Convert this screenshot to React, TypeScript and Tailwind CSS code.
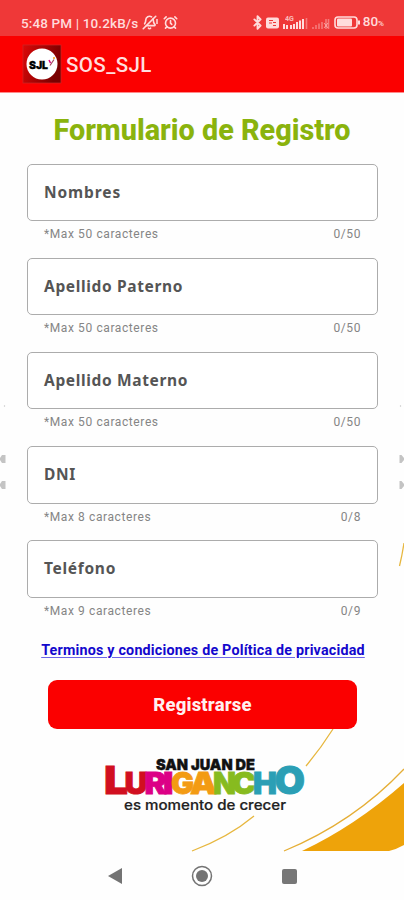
import { AlarmClock, BellOff, Bluetooth } from "lucide-react";

const fields = [
  { label: "Nombres", max: 50, spacing: "tracking-[0.9px]" },
  { label: "Apellido Paterno", max: 50, spacing: "tracking-[0.65px]" },
  { label: "Apellido Materno", max: 50, spacing: "tracking-[0.65px]" },
  { label: "DNI", max: 8, spacing: "tracking-[0.6px]" },
  { label: "Teléfono", max: 9, spacing: "tracking-[0.7px]" },
];

const logoLetters = [
  { char: "L", x: 104, width: 24, size: 39, color: "#d10f20" },
  { char: "U", x: 124.5, width: 23, size: 30, color: "#d10f20" },
  { char: "R", x: 144.5, width: 22, size: 30, color: "#dc0086" },
  { char: "I", x: 163, width: 10.5, size: 30, color: "#dc0086" },
  { char: "G", x: 171, width: 23, size: 30, color: "#f39b13" },
  { char: "A", x: 190, width: 27, size: 30, color: "#f39b13" },
  { char: "N", x: 213, width: 23, size: 30, color: "#87bb1f" },
  { char: "C", x: 232, width: 24, size: 30, color: "#87bb1f" },
  { char: "H", x: 253, width: 24, size: 30, color: "#2b9fb5" },
  { char: "O", x: 274.5, width: 30.5, size: 38, color: "#2b9fb5" },
];

const StatusBar = () => {
  return (
    <div className="flex h-9 items-end bg-[#ef3838] pl-[21px] pr-[20px] pb-[5px] text-[#ffdcdc]">
      <span className="w-[119px] whitespace-nowrap text-[13.5px] font-medium leading-[15px] tracking-[0.13px]">5:48 PM | 10.2kB/s</span>
      <div className="mb-px ml-[2px] flex">
        <BellOff className="size-[15px] -scale-x-100" strokeWidth={2.6} />
        <svg className="-ml-px" width="3" height="15" viewBox="0 0 3 15">
          <path d="M1 4v5" stroke="currentColor" strokeWidth="1.5" />
        </svg>
      </div>
      <AlarmClock className="mb-px ml-[4px] size-[15px]" strokeWidth={2.6} />
      <div className="ml-auto flex items-center">
        <Bluetooth className="size-[15px]" strokeWidth={3} />
        <svg className="ml-px" width="13" height="12" viewBox="0 0 13 12">
          <rect width="13" height="11" y=".5" rx="2" fill="currentColor" />
          <path d="M3 3.5h4M3 6h3M7 5.5h3M7 8.5h3" stroke="#ef3838" strokeWidth="1.2" />
        </svg>
        <svg className="ml-[3px]" width="50" height="15" viewBox="0 0 50 15">
          <text x="3" y="6" fontSize="7" fontWeight="700" fill="currentColor" opacity=".8">4G</text>
          <path d="M2 9v5M5 10v4M9 10v4M12 9v5M15 7v7M18 5.5v8.500M21 4v10" stroke="currentColor" strokeWidth="2" />
          <path d="M24.500 3v11M31 12v2M34 10v4M37 8.500v5.500M40 7v7M44 4v10M46.500 4v10" stroke="currentColor" strokeWidth="1.600" opacity=".4" />
          <path d="M42 8l4 5M46 8l-4 5" stroke="currentColor" opacity=".6" />
        </svg>
        <svg className="ml-[2px]" width="27" height="13" viewBox="0 0 27 13">
          <rect x="1" y="1" width="22" height="11" rx="3" fill="none" stroke="currentColor" strokeWidth="1.600" />
          <rect x="3" y="2.5" width="15" height="8" rx="1" fill="currentColor" />
          <path d="M25 4.500v4" stroke="currentColor" strokeWidth="2" />
        </svg>
        <span className="ml-[2px] text-[13.5px] font-medium leading-[14px]">80<span className="text-[8px]">%</span></span>
      </div>
    </div>
  );
};

const AppBar = () => {
  return (
    <header className="flex h-[57px] items-center border-b border-[#ff8a8a] bg-[#fb0000] pl-[22px]">
      <svg width="40" height="40" viewBox="0 0 40 40">
        <defs>
          <linearGradient id="badge" x1="0" y1="0" x2="1" y2="0.300">
            <stop offset="0" stopColor="#dc0808" />
            <stop offset="1" stopColor="#780000" />
          </linearGradient>
        </defs>
        <rect x="1" y="1" width="38" height="38" fill="url(#badge)" stroke="#c82828" strokeWidth=".7" />
        <circle cx="20" cy="20" r="15.500" fill="white" />
        <text x="7" y="24.500" fontFamily="Inter" fontWeight="900" fontSize="10.500" textLength="19" lengthAdjust="spacingAndGlyphs" stroke="black" strokeWidth=".3">SJL</text>
        <path d="M27 16l1.500 3" stroke="#dc0086" strokeWidth="1.500" />
        <path d="M28 21.500l4-6" stroke="#a5425f" strokeWidth="1.200" />
        <circle cx="32" cy="14" r="1" fill="#f39b13" />
      </svg>
      <h1 className="ml-[4px] pt-[2px] text-[20.5px] font-medium tracking-[0.4px] text-[#ffdede]">SOS_SJL</h1>
    </header>
  );
};

const Background = () => {
  return (
    <svg className="absolute inset-0" width="404" height="900" viewBox="0 0 404 900" fill="none">
      <path d="M404 543Q402 556 399.500 566M333 729Q321 748 306 766M254 816Q229 837 192 851" stroke="#e7b73f" strokeWidth="1.300" />
      <path d="M284 851Q354 822 404 769" stroke="#e5ae36" strokeWidth="1.300" />
      <path d="M302 851Q355 826 404 783V845Q397 849 389 851Z" fill="#eea30a" />
      <g fill="#c4c4c4">
        <path d="M0 458l2-3h3.500v8H2L0 460zM0 484l2-3h3.500v8H2L0 486z" />
        <path d="M399.500 455h2l2.500 3v2l-2.500 3h-2zM399.500 481h2l2.500 3v2l-2.500 3h-2z" />
        <circle cx="4.500" cy="406" r=".7" />
        <circle cx="400.500" cy="406" r=".7" />
      </g>
    </svg>
  );
};

const Logo = () => {
  return (
    <svg className="ml-[103px] mt-[23px]" width="204" height="62" viewBox="103 752 204 62" fontFamily="Inter">
      <text x="156" y="770" fontSize="15" fontWeight="900" textLength="99" lengthAdjust="spacingAndGlyphs" fill="#111" stroke="#111" strokeWidth=".4">SAN JUAN DE</text>
      {logoLetters.map((letter) => (
        <text key={letter.char} x={letter.x} y={794} fontSize={letter.size} fontWeight="900" textLength={letter.width} lengthAdjust="spacingAndGlyphs" fill={letter.color} stroke={letter.color} strokeWidth=".8">
          {letter.char}
        </text>
      ))}
      <text x="124" y="809.500" fontSize="14" fontWeight="500" textLength="162" lengthAdjust="spacingAndGlyphs" fill="#222" stroke="#222" strokeWidth=".2">es momento de crecer</text>
    </svg>
  );
};

const App = () => {
  return (
    <div className="relative flex h-[900px] w-[404px] flex-col overflow-hidden bg-[#fefefe] font-[Roboto,sans-serif]">
      <Background />
      <div className="relative flex flex-1 flex-col">
        <StatusBar />
        <AppBar />
        <h2 className="mt-[19px] h-9 whitespace-nowrap text-center text-[28.8px] font-extrabold leading-9 text-[#8ab30d]">
          Formulario de Registro
        </h2>
        <form className="ml-[27px] mr-[26px] mt-[15.5px] flex flex-col">
          {fields.map((field) => (
            <div key={field.label} className="h-[94.2px]">
              <div className="flex h-[57.500px] items-center rounded-[5px] border border-[#acacac] bg-white pl-4">
                <label className={`font-["Noto_Sans",sans-serif] text-[15.5px] font-bold text-[#555] ${field.spacing}`}>{field.label}</label>
              </div>
              <div className="flex justify-between pl-[17px] pr-[17px] pt-[4px] text-[12px] leading-[18px] tracking-[0.6px] text-[#858585]">
                <span>*Max {field.max} caracteres</span>
                <span>0/{field.max}</span>
              </div>
            </div>
          ))}
        </form>
        <a className="ml-0.5 mt-[5.5px] self-center whitespace-nowrap text-[14.3px] font-bold leading-5 tracking-[0.2px] text-[#1308cd] underline decoration-[#6d66e8] underline-offset-2">
          Terminos y condiciones de Política de privacidad
        </a>
        <button type="button" className="ml-12 mt-[20.5px] h-[49px] w-[309px] rounded-[9px] bg-[#fb0000] pt-0.5 text-[18.5px] font-extrabold tracking-[0.2px] text-[#fff0f0]">
          Registrarse
        </button>
        <Logo />
        <nav className="mt-auto flex h-[48px] items-center pl-[107px]">
          <svg width="16" height="18" viewBox="0 0 16 18">
            <path d="M1 9L15 1v16z" fill="#737373" />
          </svg>
          <svg className="ml-[68px]" width="22" height="22" viewBox="0 0 22 22">
            <circle cx="11" cy="11" r="9.500" fill="none" stroke="#737373" strokeWidth="1.500" />
            <circle cx="11" cy="11" r="6" fill="#737373" />
          </svg>
          <span className="ml-[69px] size-[15px] rounded-[2px] bg-[#777]" />
        </nav>
      </div>
    </div>
  );
};

export default App;
